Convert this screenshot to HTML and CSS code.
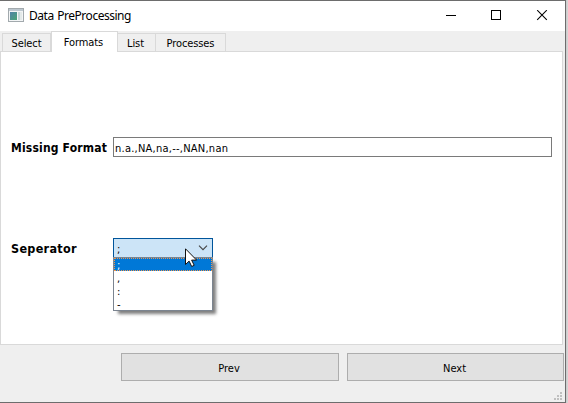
FILE: index.html
```html
<!DOCTYPE html>
<html lang="en">
<head>
<meta charset="utf-8">
<title>Data PreProcessing</title>
<link rel="stylesheet" href="styles.css">
</head>
<body>
<div class="window">
  <header class="titlebar">
    <svg class="app-icon" width="16" height="14" viewBox="0 0 16 14">
      <defs><linearGradient id="pane" x1="0" y1="0" x2="1" y2="1"><stop offset="0" stop-color="#4f83a8"/><stop offset="1" stop-color="#48a474"/></linearGradient></defs>
      <path fill="#a2a9ad" d="M0 0h16v14H0z"/><path fill="#f3f5f6" d="M1 1h14v12H1z"/><path fill="#bcc7cf" d="M1 1h14v2H1z"/>
      <path fill="url(#pane)" d="M2 4h7v8H2z"/><path fill="#c4d8d8" d="M10 4h2v8h-2z"/><path fill="#e3e9e9" d="M12 4h2v8h-2z"/>
    </svg>
    <h1 class="title">Data PreProcessing</h1>
    <svg class="controls" width="104" height="12" viewBox="0 0 104 12" fill="none" stroke="#000">
      <path d="M0 5.500h10M45.500.5h9v9h-9z" shape-rendering="crispEdges"/><path d="M91.200.2l9.600 9.600M100.800.2l-9.600 9.600" stroke-width="1.100"/>
    </svg>
  </header>
  <nav class="tabs">
    <div class="tab select">Select</div>
    <div class="tab active">Formats</div>
    <div class="tab list">List</div>
    <div class="tab processes">Processes</div>
  </nav>
  <main class="panel">
    <div class="row first">
      <label class="label missing">Missing Format</label>
      <div class="input">n.a.,NA,na,--,NAN,nan</div>
    </div>
    <div class="row">
      <label class="label separator">Seperator</label>
      <div class="combo">
        <span>;</span>
        <svg class="chevron" width="10" height="6" viewBox="0 0 10 6"><path d="M1 .7l4 4 4-4" fill="none" stroke="#444" stroke-width="1.100"/></svg>
        <div class="menu">
          <div class="option chosen">;</div>
          <div class="option">,</div>
          <div class="option">:</div>
          <div class="option">-</div>
        </div>
        <svg class="cursor" width="13" height="20" viewBox="0 0 13 20"><path d="M.5.8v15.700l3.600-3.400 2.600 5.400 2.500-1.200-2.600-5.200h5z" fill="#fff" stroke="#111"/></svg>
      </div>
    </div>
  </main>
  <footer class="footer">
    <div class="button prev">Prev</div>
    <div class="button next">Next</div>
    <svg class="grip" width="8" height="8" viewBox="0 0 8 8" fill="#bfbfbf"><path d="M6 0h2v2H6zM3 3h2v2H3zM6 3h2v2H6zM0 6h2v2H0zM3 6h2v2H3zM6 6h2v2H6z"/></svg>
  </footer>
</div>
</body>
</html>
```

FILE: styles.css
```css
* { box-sizing: border-box; }
body { margin: 0; width: 568px; height: 403px; overflow: hidden; background: linear-gradient(90deg, #c4c4c4 566px, #d5d5d5 567px); font: 11px/14px "DejaVu Sans Condensed", "DejaVu Sans", sans-serif; color: #000; }
.window { width: 566px; height: 403px; display: flex; flex-direction: column; background: #efefef; border: solid #6d6d6d; border-width: 1px 1px 1px 0; }
.titlebar { height: 30px; flex: none; display: flex; align-items: center; background: #fff; padding-left: 8px; }
.app-icon { margin-top: -2px; }
.title { margin: 0 0 0 5px; font: 12px/16px "Noto Sans", sans-serif; letter-spacing: -0.48px; word-spacing: 1px; }
.controls { margin: 0 15px 0 auto; }
.tabs { height: 20px; flex: none; display: flex; align-items: flex-end; padding-left: 2px; }
.tab { height: 18px; border: 1px solid #d9d9d9; border-width: 1px 1px 0 0; text-align: center; padding-top: 3px; letter-spacing: -0.1px; }
.tab.select { width: 49px; border-left-width: 1px; }
.tab.active { width: 67px; height: 21px; margin-bottom: -1px; background: #fff; border-left-width: 1px; position: relative; padding: 4px 2px 0 0; }
.tab.list { width: 38px; padding-right: 2px; }
.tab.processes { width: 70px; }
.panel { width: 563px; height: 294px; flex: none; background: #fff; border: 1px solid #d9d9d9; padding-left: 10px; }
.row { display: flex; align-items: center; height: 20px; }
.row.first { margin: 85px 0 81px; }
.label { width: 102px; font-size: 12px; font-weight: bold; white-space: nowrap; padding-top: 1px; }
.missing { letter-spacing: 0.18px; }
.separator { font-size: 12.5px; letter-spacing: 0.3px; }
.input { width: 439px; height: 20px; border: 1px solid #7a7a7a; padding: 4px 1px 0; letter-spacing: 0.24px; }
.combo { position: relative; width: 100px; height: 20px; display: flex; align-items: center; justify-content: space-between; border: 1px solid #00559b; background: #cce4f7; padding: 3px 4px 0 3px; }
.chevron { margin-top: -3px; }
.menu { position: absolute; left: -1px; top: 18px; width: 100px; height: 54px; border: 1px solid #7b8490; background: #fff; box-shadow: 4px 4px 3px -1px rgba(0,0,0,.5); }
.option { height: 13px; line-height: 15px; padding-left: 3px; }
.option.chosen { background: #0078d7; color: #fff; outline: 1px dotted #ed954f; outline-offset: -1px; }
.cursor { position: absolute; left: 71px; top: 9px; }
.footer { flex: 1; display: flex; position: relative; padding: 8px 0 0 121px; gap: 8px; }
.button { height: 28px; border: 1px solid #adadad; background: #e1e1e1; text-align: center; line-height: 29px; padding-right: 2px; }
.prev { width: 218px; }
.next { width: 217px; }
.grip { position: absolute; right: 3px; bottom: 2px; }
```
